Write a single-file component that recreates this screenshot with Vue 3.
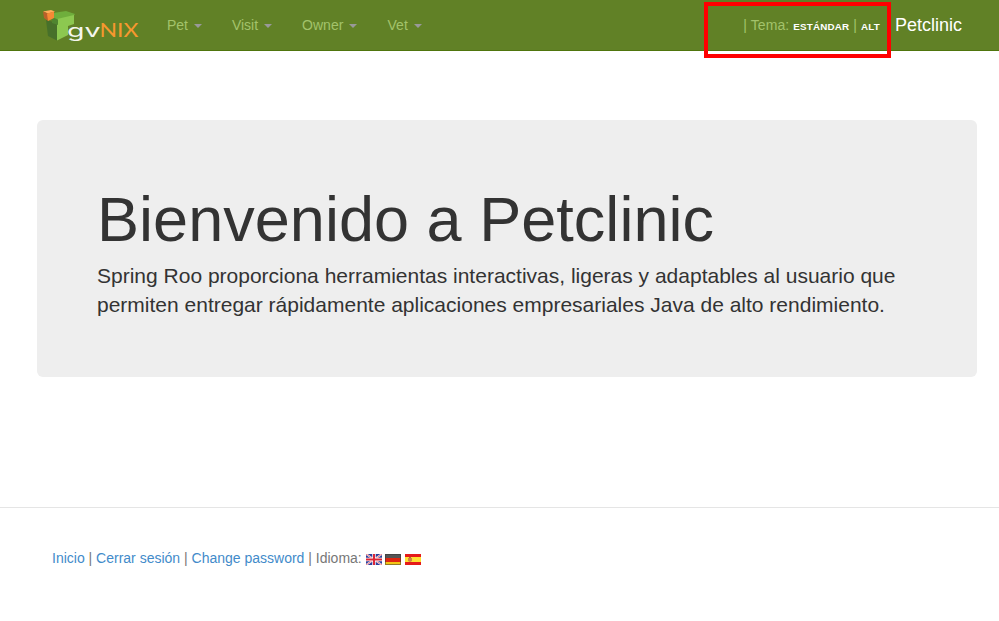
<script setup>
const menus = ['Pet', 'Visit', 'Owner', 'Vet']
</script>

<template>
  <div class="page">
    <header class="navbar">
      <a class="brand">
        <svg class="logo" width="98" height="34" viewBox="0 0 98 34">
          <path d="M4 11 L15 14 V31.5 L6 27 Z" fill="#47702a" />
          <path d="M11 4 L24 2 L33 5 L31 8 L16 11 L11 9 Z" fill="#6fae3c" />
          <path d="M15 10 L32 6 V15 L26 17 V26 L15 31.5 Z" fill="#8cc850" />
          <path d="M10 8 L16 10.5 V16 L10 14 Z" fill="#4f8530" />
          <path d="M1 2.5 L9 1 L13 2.5 L6 4.5 Z" fill="#ffac5b" />
          <path d="M1 2.5 L6 4.5 V12 L2 9 Z" fill="#b9602a" />
          <path d="M5 4.5 L12 2.5 V9 L6 12 Z" fill="#f58a35" />
          <text class="logo-gv" x="25" y="27.5" textLength="33.5" lengthAdjust="spacingAndGlyphs">gv</text>
          <text class="logo-nix" x="57.5" y="27.7" textLength="39" lengthAdjust="spacingAndGlyphs">NIX</text>
        </svg>
      </a>
      <nav class="menu">
        <a v-for="m in menus" :key="m">{{ m }} <b class="caret"></b></a>
      </nav>
      <div class="theme">| Tema: <strong>ESTÁNDAR</strong> | <strong>ALT</strong></div>
      <div class="app-name">Petclinic</div>
      <div class="highlight"></div>
    </header>

    <main class="jumbotron">
      <h1>Bienvenido a Petclinic</h1>
      <p>Spring Roo proporciona herramientas interactivas, ligeras y adaptables al usuario que permiten entregar rápidamente aplicaciones empresariales Java de alto rendimiento.</p>
    </main>

    <footer class="footer">
      <span><a>Inicio</a> | <a>Cerrar sesión</a> | <a>Change password</a> | Idioma:</span>
      <span class="flags">
        <svg width="16" height="11" viewBox="0 0 16 11">
          <rect width="16" height="11" fill="#2c3f9c" />
          <path d="M0 0 L16 11 M16 0 L0 11" stroke="#fff" stroke-width="1.8" />
          <path d="M0 0 L16 11 M16 0 L0 11" stroke="#e4404c" stroke-width="0.7" />
          <path d="M8 0 V11 M0 5.5 H16" stroke="#fff" stroke-width="3.4" />
          <path d="M8 0 V11 M0 5.5 H16" stroke="#dc2637" stroke-width="2" />
        </svg>
        <svg width="16" height="11" viewBox="0 0 16 11">
          <rect width="16" height="4" fill="#555" />
          <rect y="4" width="16" height="4" fill="#df2510" />
          <rect y="8" width="16" height="3" fill="#f3c516" />
          <rect x=".5" y=".5" width="15" height="10" fill="none" stroke="#333" stroke-opacity=".5" />
        </svg>
        <svg width="16" height="11" viewBox="0 0 16 11">
          <rect width="16" height="11" fill="#e51a1a" />
          <rect y="3" width="16" height="5" fill="#ffe033" />
          <path d="M3 4 H7 V7 L5 8 L3 7 Z" fill="#ce8541" />
          <rect x="4" y="3" width="2" height="1" fill="#b8652f" />
        </svg>
      </span>
    </footer>
  </div>
</template>

<style>
body {
  margin: 0;
  background: #fff;
}
</style>

<style scoped>
.page {
  min-height: 621px;
  font-family: "Liberation Sans", Arial, sans-serif;
  font-size: 14px;
  line-height: 20px;
  color: #333;
}
.navbar {
  position: relative;
  display: flex;
  height: 50px;
  background: #618126;
  border-bottom: 1px solid #4f750d;
}
.brand {
  width: 110px;
  padding: 9px 0 0 42px;
}
.logo {
  display: block;
  overflow: visible;
}
.logo-gv {
  font-family: Inter, "Liberation Sans", sans-serif;
  font-size: 18px;
  fill: #f4f6ee;
}
.logo-nix {
  font-family: Lato, "Liberation Sans", sans-serif;
  font-size: 18.5px;
  fill: #f7982f;
}
.menu {
  display: flex;
  flex: 1;
}
.menu a {
  padding: 15px;
  color: #a3c36b;
  white-space: nowrap;
}
.caret {
  display: inline-block;
  margin-left: 2px;
  vertical-align: middle;
  border-top: 4px solid #999;
  border-left: 4px solid transparent;
  border-right: 4px solid transparent;
}
.menu a:nth-child(n + 3) {
  letter-spacing: 0.06px;
}
.theme {
  padding: 15px 15px 0 0;
  color: #a3c36b;
  white-space: nowrap;
  letter-spacing: 0.1px;
}
.theme strong {
  font-size: 9.8px;
  letter-spacing: 0.2px;
  color: #fff;
}
.app-name {
  padding: 15px 37px 0 0;
  font-size: 18px;
  color: #fff;
}
.highlight {
  position: absolute;
  top: 2px;
  left: 704px;
  box-sizing: border-box;
  width: 187px;
  height: 56px;
  border: 4px solid #f00;
}
.jumbotron {
  box-sizing: border-box;
  width: 940px;
  height: 257px;
  margin: 69px 0 0 37px;
  padding: 68px 60px 0;
  background: #eee;
  border-radius: 6px;
}
h1 {
  margin: 0 0 10px;
  font-size: 63px;
  font-weight: 500;
  line-height: 63px;
  letter-spacing: 0.03px;
}
.jumbotron p {
  margin: 0;
  font-size: 21px;
  line-height: 29.4px;
}
.footer {
  display: flex;
  gap: 4px;
  margin-top: 130px;
  padding: 40px 52px;
  border-top: 1px solid #e5e5e5;
  color: #777;
}
.footer a {
  color: #428bca;
}
.flags {
  display: flex;
  gap: 3.5px;
  padding-top: 6px;
}
</style>
